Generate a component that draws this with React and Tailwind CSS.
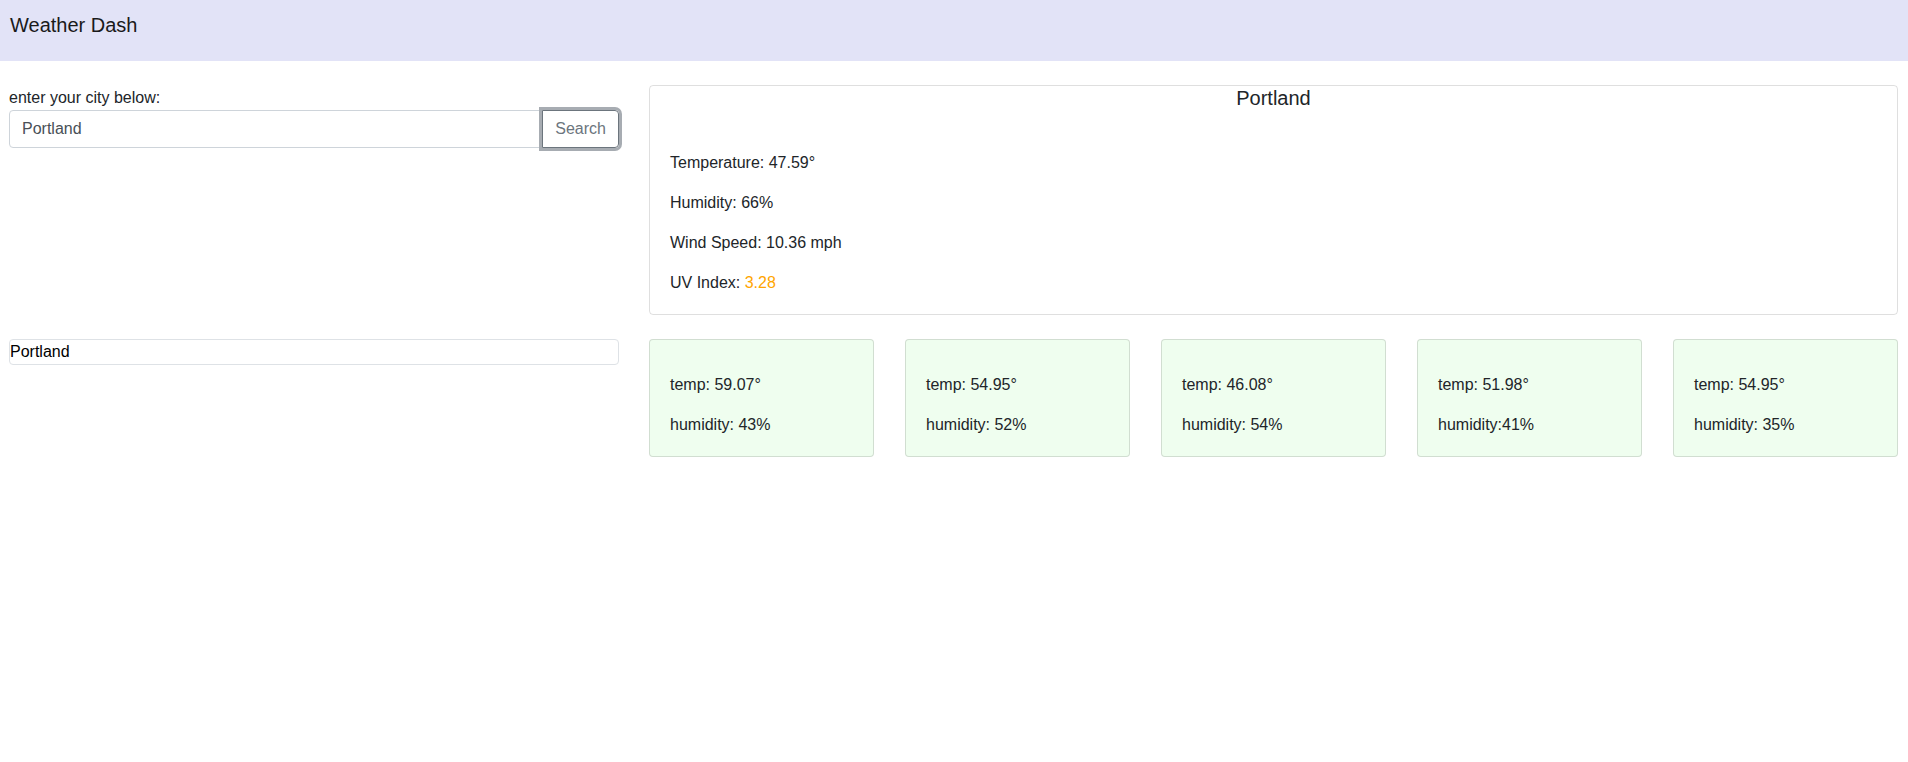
export default function App() {
  const forecast = [
    { temp: "temp: 59.07°", hum: "humidity: 43%" },
    { temp: "temp: 54.95°", hum: "humidity: 52%" },
    { temp: "temp: 46.08°", hum: "humidity: 54%" },
    { temp: "temp: 51.98°", hum: "humidity:41%" },
    { temp: "temp: 54.95°", hum: "humidity: 35%" },
  ];
  return (
    <div className="min-h-[762px] bg-white font-['Liberation_Sans',Arial,sans-serif] text-[16px] leading-6 text-[#212529]">
      <header className="h-[61px] bg-[#e2e3f7] px-[10px] pt-[13px]">
        <h1 className="text-[20px] leading-6 text-[#1a1a1a]">Weather Dash</h1>
      </header>

      <div className="mt-6 flex gap-[30px] pl-[9px] pr-[10px]">
        <div className="flex w-[610px] flex-col">
          <label className="pt-px leading-6">enter your city below:</label>
          <div className="flex">
            <input
              readOnly
              value="Portland"
              className="h-[38px] flex-1 rounded-l-[4px] border border-[#ced4da] px-3 text-[16px] text-[#495057] outline-none"
            />
            <button className="relative z-10 -ml-px h-[38px] rounded-r-[4px] border border-[#6c757d] px-3 text-[#6c757d] shadow-[0_0_0_3px_#a7acb2]">
              Search
            </button>
          </div>
        </div>

        <div className="flex-1 rounded-[4px] border border-[rgba(0,0,0,0.125)]">
          <h5 className="text-center text-[20px] leading-6">Portland</h5>
          <div className="flex flex-col gap-4 px-5 pb-5 pt-10">
            <p className="pt-px">Temperature: 47.59°</p>
            <p>Humidity: 66%</p>
            <p>Wind Speed: 10.36 mph</p>
            <p className="-mb-px">
              UV Index: <span className="text-[#ffa500]">3.28</span>
            </p>
          </div>
        </div>
      </div>

      <div className="mt-6 flex items-start gap-[30px] pl-[9px] pr-[10px]">
        <div className="w-[610px]">
          <button className="block h-[26px] w-full rounded-[4px] border border-[#dee2e6] text-left leading-6 text-black">
            Portland
          </button>
        </div>
        <div className="flex flex-1 justify-between">
          {forecast.map((f, i) => (
            <div
              key={i}
              className="flex w-[225px] flex-col gap-4 rounded-[4px] border border-[rgba(0,0,0,0.125)] bg-[#effeef] px-5 pb-[19px] pt-[33px]"
            >
              <p>{f.temp}</p>
              <p>{f.hum}</p>
            </div>
          ))}
        </div>
      </div>
    </div>
  );
}
